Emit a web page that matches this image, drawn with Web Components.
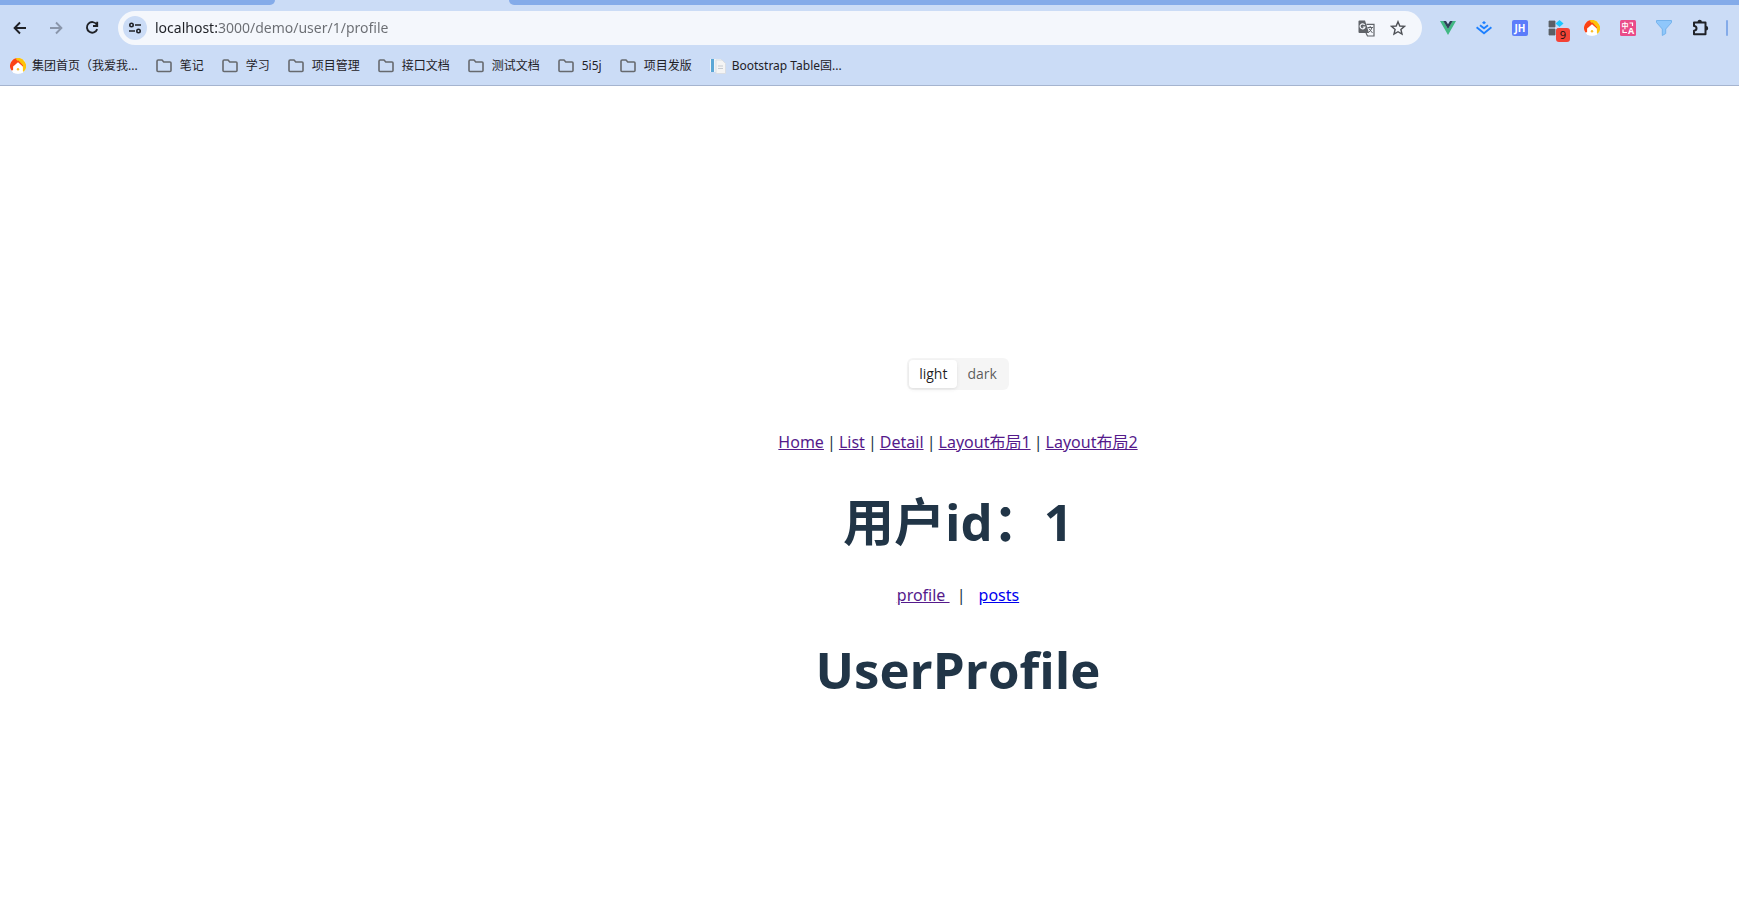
<!DOCTYPE html>
<html lang="zh-CN">
<head>
<meta charset="utf-8">
<title>User profile</title>
<style>
  html, body { margin: 0; height: 100%; }
  body {
    font-family: "Noto Sans", "Noto Sans CJK SC", sans-serif;
    background: #fff;
  }
</style>
</head>
<body>
<browser-window>
  <browser-toolbar slot="chrome"></browser-toolbar>
  <bookmark-bar slot="chrome">
    <bookmark-item icon="house">集团首页（我爱我...</bookmark-item>
    <bookmark-item>笔记</bookmark-item>
    <bookmark-item>学习</bookmark-item>
    <bookmark-item>项目管理</bookmark-item>
    <bookmark-item>接口文档</bookmark-item>
    <bookmark-item>测试文档</bookmark-item>
    <bookmark-item>5i5j</bookmark-item>
    <bookmark-item>项目发版</bookmark-item>
    <bookmark-item icon="doc">Bootstrap Table固...</bookmark-item>
  </bookmark-bar>
  <user-page></user-page>
</browser-window>

<script>
const HOUSE = `<svg width="16" height="16" viewBox="0 0 16 16" aria-hidden="true">
  <circle cx="8" cy="8" r="8" fill="#fbfcfd"/>
  <path d="M8 0A8 8 0 0 0 1.500 12.600L3.500 12V8L8 4.500Z" fill="#fb4316"/>
  <path d="M5.500 .4A8 8 0 0 1 13.500 13.800L12.500 13V8.500L8 3.500Z" fill="#fdc30b"/>
  <path d="M5.500 3.500 8.500 2.500 13 7.500V9.500L8 5 3.500 9V6Z" fill="#fb4316"/>
  <path d="M8 4.200 12.800 8.600V15H3.200V8.600Z" fill="#fff"/>
  <circle cx="8" cy="11.200" r="1.200" fill="#f9bb2a"/></svg>`;

const define = (name, html) => {
  const template = document.createElement('template');
  template.innerHTML = html;
  customElements.define(name, class extends HTMLElement {
    constructor() {
      super();
      this.attachShadow({ mode: 'open' }).append(template.content.cloneNode(true));
    }
  });
};

define('browser-window', `
<style>
  :host { display: flex; flex-direction: column; min-height: 100vh; }
  .tabs { display: flex; height: 5px; background: #cbdcf6; }
  .tab { background: #84abe9; }
  .left { width: 275px; border-bottom-right-radius: 5px; }
  .active { width: 234px; }
  .right { flex: 1; border-bottom-left-radius: 5px; }
  header { background: #cbdcf6; border-bottom: 1px solid #a5b4cf; }
  main { flex: 1; display: flex; flex-direction: column; justify-content: center; }
</style>
<div class="tabs"><div class="tab left"></div><div class="active"></div><div class="tab right"></div></div>
<header><slot name="chrome"></slot></header>
<main><slot></slot></main>`);

define('tool-button', `
<style>
  :host { display: block; flex: none; }
  button { display: flex; align-items: center; justify-content: center; position: relative;
    width: 32px; height: 32px; padding: 0; border: 0; border-radius: 16px; background: none; }
</style>
<button type="button"><slot></slot></button>`);

define('browser-toolbar', `
<style>
  :host { display: flex; align-items: center; gap: 4px; padding: 6px 11px 0 4px; height: 34px; }
  svg { display: block; }
  form { flex: 1; display: flex; align-items: center; height: 34px; margin: 0 6px;
    padding: 0 8px 0 5px; box-sizing: border-box; border-radius: 17px; background: #f4f7fc; }
  .site { display: flex; align-items: center; justify-content: center; width: 24px; height: 24px;
    padding: 0; border: 0; border-radius: 12px; background: #cbdcf6; }
  input { flex: 1; min-width: 0; height: 24px; margin: 0 8px; padding: 0; border: 0; outline: 0;
    font: 14px/24px "Noto Sans", sans-serif; color: #5f6368;
    background: linear-gradient(90deg, #1f2126 62px, #6a6d72 62px); -webkit-background-clip: text;
    background-clip: text; -webkit-text-fill-color: transparent; }
  .divider { width: 2px; height: 16px; margin-left: 6px; border-radius: 1px; background: #84abe9; }
  .badge { position: absolute; left: 16px; top: 16px; width: 14px; height: 14px; border-radius: 3px;
    background: #f44336; color: #111; font: 11px/14px "Open Sans", sans-serif; text-align: center; }
</style>
<tool-button><svg width="16" height="16" viewBox="0 0 16 16" fill="none" stroke="#1f2126" stroke-width="1.900"><path d="M14 8H3M8 2.500 2.600 8 8 13.500"/></svg></tool-button>
<tool-button><svg width="16" height="16" viewBox="0 0 16 16" fill="none" stroke="#8a96ab" stroke-width="1.900"><path d="M2 8h11M8 2.500 13.400 8 8 13.500"/></svg></tool-button>
<tool-button><svg width="16" height="16" viewBox="0 0 16 16" fill="none" stroke="#1f2126" stroke-width="1.900"><path d="M12.700 4.500A5.300 5.300 0 1 0 13.200 9.200M13.200 1.800V6H9"/></svg></tool-button>
<form>
  <button class="site" type="button" aria-label="Site information"><svg width="14" height="14" viewBox="0 0 14 14" fill="none" stroke="#1f2126" stroke-width="1.600"><circle cx="3.500" cy="4" r="1.700"/><path d="M7 4h6M1 10h6"/><circle cx="10.500" cy="10" r="1.700"/></svg></button>
  <input type="text" aria-label="Address" value="localhost:3000/demo/user/1/profile">
  <tool-button><svg width="17" height="17" viewBox="0 0 17 17"><path d="M1.500.5H7L8 3.500 11 13H1.500Q.5 13 .5 12V1.500Q.5.5 1.500.5Z" fill="#5f6368"/><path d="M6.700 5A2.500 2.500 0 1 0 7 7H4.800" fill="none" stroke="#f4f7fc" stroke-width="1.200"/><path d="M8.500 4.300H16V16H9.500L8 13" fill="none" stroke="#5f6368" stroke-width="1.200"/><path d="M9.500 7.500H15M12.200 6v1.500M14 7.500Q13 11 10.500 12.500M10.800 8.500 14.500 13" fill="none" stroke="#5f6368"/></svg></tool-button>
  <tool-button><svg width="16" height="16" viewBox="0 0 16 16" fill="none" stroke="#4e5156" stroke-width="1.400"><path d="m8 1.700 1.800 4.300 4.700.4-3.600 3.100 1.100 4.600L8 11.700l-4 2.400 1.100-4.600L1.500 6.400 6.200 6Z"/></svg></tool-button>
</form>
<tool-button><svg width="16" height="14" viewBox="0 0 16 14"><path d="M0 0H3.500L8 8 12.500 0H16L8 14Z" fill="#41b883"/><path d="M3.300 0H6L8 3.200 10 0H12.700L8 8Z" fill="#2f4058"/></svg></tool-button>
<tool-button><svg width="16" height="14" viewBox="0 0 16 14" fill="none" stroke="#1e80ff" stroke-width="1.900"><path d="M.6 6.300 8 12.300 15.400 6.300M4 4.200 8 7.300 12 4.200"/><path d="M8 0 10 1.700 8 3.300 6 1.700Z" fill="#1e80ff" stroke="none"/></svg></tool-button>
<tool-button><svg width="16" height="16" viewBox="0 0 16 16"><rect width="16" height="16" rx="2" fill="#5c7cfa"/><text x="8" y="12" text-anchor="middle" font-family="Open Sans" font-weight="700" font-size="10" fill="#fff">JH</text></svg></tool-button>
<tool-button><svg width="16" height="16" viewBox="0 0 16 16"><path d="M1 1h6v6H1ZM1 9h6v6H1ZM9 9h6v6H9Z" fill="#5b5f66" stroke="#5b5f66" stroke-width=".8" stroke-linejoin="round"/><path d="m11.500 0 4 3.500-4 3.500-4-3.500Z" fill="#1cc8ff"/></svg><span class="badge">9</span></tool-button>
<tool-button>${HOUSE}</tool-button>
<tool-button><svg width="16" height="16" viewBox="0 0 16 16"><rect width="16" height="16" rx="1.500" fill="#ea4c89"/><text x="5" y="8" text-anchor="middle" font-family="Noto Sans CJK SC" font-weight="700" font-size="7" fill="#fff">中</text><text x="11" y="14" text-anchor="middle" font-family="Open Sans" font-weight="700" font-size="9" fill="#fff">A</text><path d="M9.500 3H12.500V6M3 9.500V12.500H7" fill="none" stroke="#fff" stroke-width="1.200"/></svg></tool-button>
<tool-button><svg width="16" height="16" viewBox="0 0 16 16"><path d="M.5.500h15v2L9.700 9v4.500L6.300 15.500V9L.5 2.500Z" fill="#8fc7fb" stroke="#74b2ec"/></svg></tool-button>
<tool-button><svg width="18" height="18" viewBox="0 0 18 18"><path d="M3 3.500H14.500V15.200H3V11.700Q5.500 11.500 5.500 9.300T3 7Z" fill="none" stroke="#1f2126" stroke-width="2" stroke-linejoin="round"/><path d="M6.500 3a2.200 2.200 0 0 1 4.400 0ZM15 7a2.200 2.200 0 0 1 0 4.400Z" fill="#1f2126"/></svg></tool-button>
<div class="divider"></div>`);

define('bookmark-bar', `
<style>
  :host { display: flex; align-items: center; gap: 18px; height: 39px; padding: 1px 0 0 10px; }
</style>
<slot></slot>`);

const bookmarkIcons = {
  house: HOUSE,
  doc: `<svg width="16" height="16" viewBox="0 0 16 16" aria-hidden="true"><path d="M0 1h11v13H0Z" fill="#eef3f8"/><path d="M1 1h3v13H1Z" fill="#5ba7d6"/><path d="M6 2h6l3.500 3.500V15.500H6Z" fill="#f4f4f4" stroke="#d9dde3"/><path d="M8 8h5M8 10.500h5" stroke="#c6cad0"/></svg>`,
  folder: `<svg width="16" height="16" viewBox="0 0 16 16" aria-hidden="true"><path d="M1 12.500V3.200Q1 2 2.200 2H6L7.800 4H14Q15 4 15 5V12.500Q15 13.500 14 13.500H2Q1 13.500 1 12.500Z" fill="none" stroke="#66696e" stroke-width="1.600"/></svg>`
};
customElements.define('bookmark-item', class extends HTMLElement {
  connectedCallback() {
    if (this.shadowRoot) return;
    const kind = this.getAttribute('icon') || 'folder';
    this.attachShadow({ mode: 'open' }).innerHTML = `
<style>
  :host { display: block; flex: none; }
  a { display: flex; align-items: center; gap: ${kind === 'folder' ? 8 : 6}px; color: #1f2126; text-decoration: none;
    font-size: 12px; line-height: 20px; white-space: nowrap; }
  svg { display: block; }
</style>
<a href="#">${bookmarkIcons[kind]}<span><slot></slot></span></a>`;
  }
});

define('theme-switch', `
<style>
  :host { display: block; }
  fieldset { display: inline-flex; margin: 0; padding: 2px; border: 0; border-radius: 6px; background: #f5f5f5;
    font: 14px/28px "Open Sans", sans-serif; color: rgba(0,0,0,.65); }
  label { padding: 0 10px; border-radius: 4px; }
  input { appearance: none; width: 0; height: 0; margin: 0; position: absolute; }
  label:has(:checked) { background: #fff; color: rgba(0,0,0,.88);
    box-shadow: 0 1px 2px rgba(0,0,0,.03), 0 1px 6px -1px rgba(0,0,0,.04), 0 2px 4px rgba(0,0,0,.04); }
</style>
<fieldset aria-label="Theme">
  <label><input type="radio" name="theme" checked>light</label><label><input type="radio" name="theme">dark</label>
</fieldset>`);

define('user-page', `
<style>
  :host { display: block; padding: 101px 0 0 177px; text-align: center; color: #213547; font-size: 16px; line-height: 24px; }
  nav { display: flex; justify-content: center; gap: 4px; margin-top: 40px; }
  nav span { display: flex; justify-content: center; width: 7px; }
  a { color: #551a8b; }
  a.new { color: #0000ee; }
  h1 { margin: 34px 0; font-family: "Open Sans", "Noto Sans CJK SC", sans-serif; font-size: 51px; line-height: 56px; }
  h1.user { margin-top: 39px; }
  .sub { gap: 8px; margin: 0; }
  .sub .new { margin-left: 6px; }
</style>
<theme-switch></theme-switch>
<nav><a href="#">Home</a><span>|</span><a href="#">List</a><span>|</span><a href="#">Detail</a><span>|</span><a href="#">Layout布局1</a><span>|</span><a href="#">Layout布局2</a></nav>
<h1 class="user">用户id：1</h1>
<nav class="sub"><a href="#">profile&nbsp;</a><span>|</span><a class="new" href="#">posts</a></nav>
<h1>UserProfile</h1>`);
</script>
</body>
</html>
